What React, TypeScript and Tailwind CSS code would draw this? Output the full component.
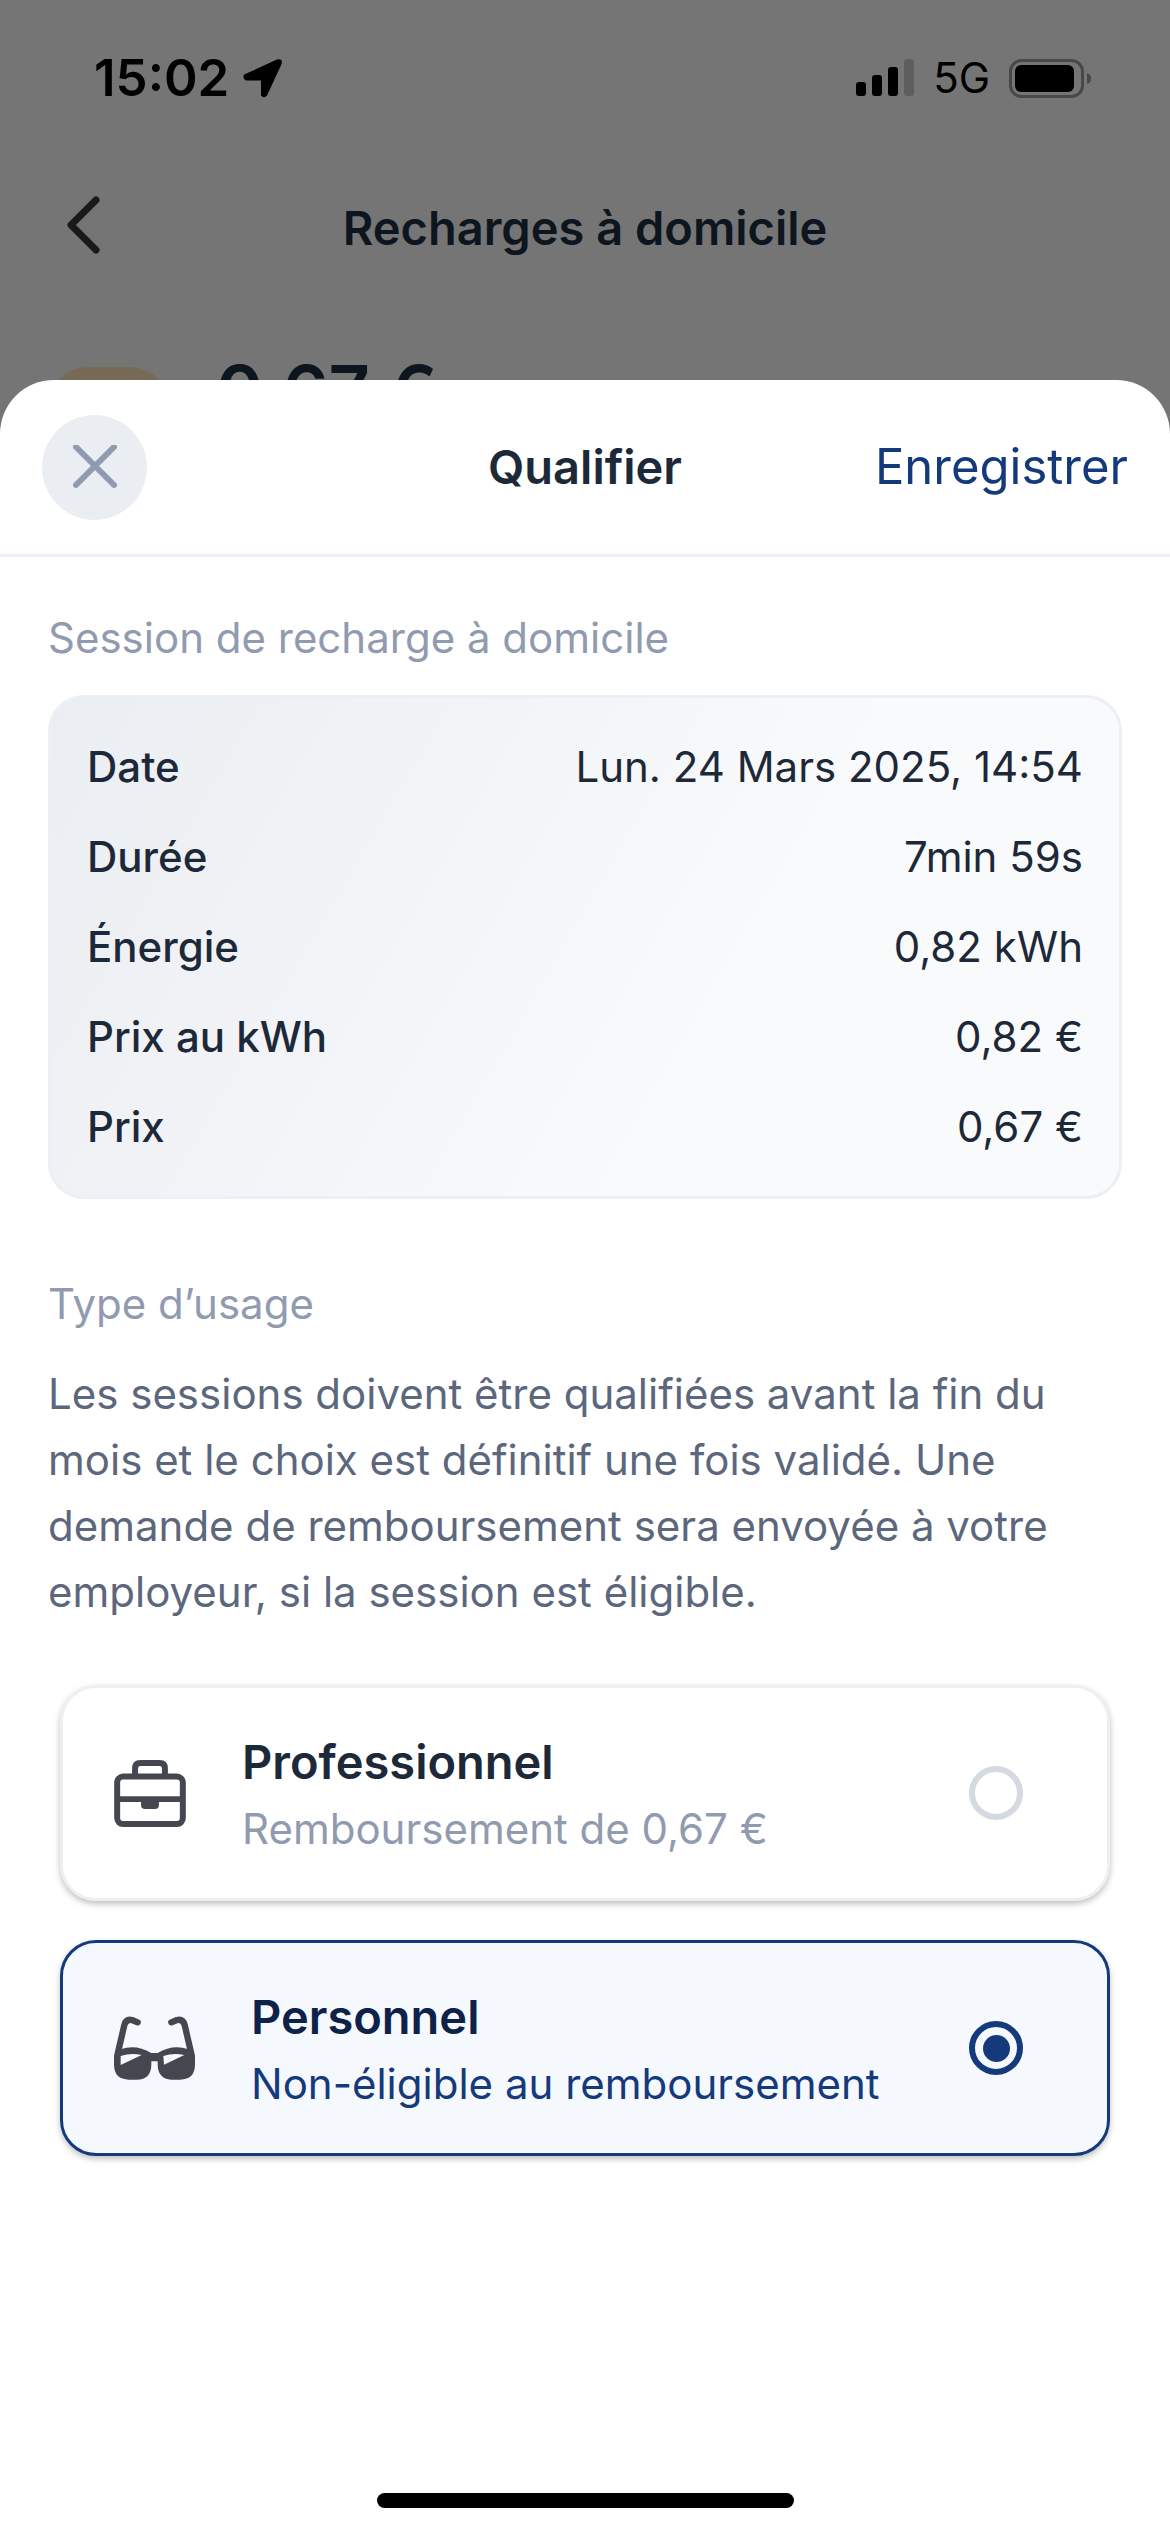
import { useState } from "react";

const details = [
  { label: "Date", value: "Lun. 24 Mars 2025, 14:54" },
  { label: "Durée", value: "7min 59s" },
  { label: "Énergie", value: "0,82 kWh" },
  { label: "Prix au kWh", value: "0,82 €" },
  { label: "Prix", value: "0,67 €" },
];

const BriefcaseIcon = () => (
  <svg viewBox="0 0 216 202" className="w-[72px] h-[67px] shrink-0" fill="none" aria-hidden="true">
    <rect x="9" y="50" width="198" height="143" rx="18" stroke="#44474f" strokeWidth="18" />
    <path d="M63 48V25Q63 9 79 9H137Q153 9 153 25V48" stroke="#44474f" strokeWidth="18" />
    <path d="M9 118H207" stroke="#44474f" strokeWidth="18" />
    <path d="M81 120H135V136Q135 148 123 148H93Q81 148 81 136Z" fill="#44474f" />
  </svg>
);

const SunglassesIcon = () => (
  <svg viewBox="0 0 243 192" className="w-[81px] h-[64px] shrink-0" fill="none" aria-hidden="true">
    <g stroke="#44474f" strokeWidth="19" strokeLinecap="round" strokeLinejoin="round">
      <path d="M10 118L31 27Q36 8 54 12L71 19" />
      <path d="M233 118L212 27Q207 8 189 12L172 19" />
    </g>
    <path
      fill="#44474f"
      fillRule="evenodd"
      d="M0 120L20 100Q66 84 112 111H131Q177 84 223 100L243 120V145Q243 191 198 191H172Q131 189 131 144V136H112V144Q112 191 68 191H45Q0 191 0 145ZM20 120Q50 110 83 117L20 147ZM148 120Q178 110 211 117L150 146Z"
    />
  </svg>
);

const StatusBar = () => (
  <div className="flex h-[141px] items-center justify-between pt-[15px] pl-[94px] pr-[79px] text-black">
    <div className="flex items-center gap-[14px]">
      <span className="text-[51px] leading-[60px] font-semibold">15:02</span>
      <svg viewBox="0 0 39 39" className="size-[39px]" aria-hidden="true">
        <path d="M34 .6Q40 -1 38.600 5L24 36.500Q21 40 18 36.500V21.500H3Q-1 19.500 1.200 15.500Z" fill="#000" />
      </svg>
    </div>
    <div className="flex items-center">
      <svg viewBox="0 0 58 38" className="w-[58px] h-[38px]" aria-hidden="true">
        <rect x="0" y="23" width="10" height="14" rx="3" />
        <rect x="16" y="16" width="10" height="21" rx="3" />
        <rect x="32" y="8" width="10" height="29" rx="3" />
        <rect x="48" y="0" width="10" height="37" rx="3" fill="#5e5e5e" />
      </svg>
      <span className="ml-[19px] text-[42px] leading-[60px]">5G</span>
      <svg viewBox="0 0 82 39" className="ml-[19px] w-[82px] h-[39px]" aria-hidden="true">
        <rect x="1.500" y="1.500" width="72" height="36" rx="11" fill="none" stroke="#484848" strokeWidth="3" />
        <rect x="6" y="6" width="59" height="27" rx="6" />
        <path d="M78 14Q82 15 82 19.500Q82 24 78 25Z" fill="#484848" />
      </svg>
    </div>
  </div>
);

interface UsageOptionProps {
  id: string;
  title: string;
  subtitle: string;
  icon: React.ReactNode;
  checked: boolean;
  onSelect: () => void;
}

const UsageOption = ({ id, title, subtitle, icon, checked, onSelect }: UsageOptionProps) => (
  <label
    htmlFor={id}
    className={`flex min-h-[216px] items-center rounded-[36px] border-[3px] pl-[51px] pr-[84px] shadow-[0_3px_6px_rgba(0,0,0,0.25)] ${
      checked ? "border-[#153a7c] bg-[#f5f8fd]" : "border-[#eceff4] bg-white"
    }`}
  >
    {icon}
    <span className="ml-[56px] flex flex-1 flex-col">
      <span className={`text-[47px] leading-[72px] font-semibold ${checked ? "text-[#0d2149]" : "text-[#1d2939]"}`}>
        {title}
      </span>
      <span className={`text-[42px] leading-[62px] ${checked ? "text-[#153a7c]" : "text-[#919bb0]"}`}>
        {subtitle}
      </span>
    </span>
    <input
      id={id}
      type="radio"
      name="usage"
      checked={checked}
      onChange={onSelect}
      className="grid size-[54px] shrink-0 appearance-none place-content-center rounded-full border-[6px] border-[#d4d9e2] before:size-[27px] before:rounded-full checked:border-[#153a7c] checked:before:bg-[#153a7c]"
    />
  </label>
);

const App = () => {
  const [usage, setUsage] = useState("personnel");

  return (
    <div className="flex min-h-screen flex-col bg-[#757575] font-['Inter',sans-serif]">
      <StatusBar />

      <div className="grid h-[174px] grid-cols-[1fr_auto_1fr] items-center px-[67px]">
        <button type="button" aria-label="Retour" className="justify-self-start">
          <svg viewBox="0 0 34 64" className="w-[34px] h-[64px]" fill="none" aria-hidden="true">
            <path d="M29 4L4 29L29 54" stroke="#1a1a1a" strokeWidth="7" strokeLinecap="round" strokeLinejoin="round" />
          </svg>
        </button>
        <h1 className="text-[47px] leading-[72px] font-semibold text-[#0d151e]">Recharges à domicile</h1>
      </div>

      <div className="flex items-start gap-[46px] px-12 pt-7">
        <div className="mt-6 size-[122px] rounded-[40px] bg-[#776b57]" />
        <p className="text-[72px] leading-[96px] font-semibold text-[#0d151e]">0,67 €</p>
      </div>

      {/* Bottom sheet, slides over the page */}
      <main className="relative -mt-[109px] flex flex-1 flex-col rounded-t-[54px] bg-white">
        <header className="grid min-h-[177px] grid-cols-[1fr_auto_1fr] items-center border-b-[3px] border-[#eeeff6] px-[42px]">
          <button
            type="button"
            aria-label="Fermer"
            className="flex size-[105px] items-center justify-center rounded-full bg-[#eaeef3]"
          >
            <svg viewBox="0 0 44 44" className="size-[44px]" fill="none" aria-hidden="true">
              <path d="M3 2L41 40M41 2L3 40" stroke="#919bb0" strokeWidth="6" strokeLinecap="round" />
            </svg>
          </button>
          <h2 className="text-[47px] leading-[72px] font-semibold text-[#1d2939]">Qualifier</h2>
          <button type="button" className="justify-self-end text-[49px] leading-[72px] text-[#153a7c]">
            Enregistrer
          </button>
        </header>

        <section className="px-12 pt-12">
          <h3 className="text-[42px] leading-[66px] text-[#919bb0]">Session de recharge à domicile</h3>
          <dl className="mt-6 flex flex-col gap-6 rounded-[36px] border-[3px] border-[#eceff5] bg-[linear-gradient(120deg,#eaeef2,#f2f3f6_30%,#f9fafc_62%)] p-9 text-[42px] leading-[66px] text-[#1d2939]">
            {details.map(({ label, value }) => (
              <div key={label} className="flex justify-between">
                <dt className="font-medium">{label}</dt>
                <dd>{value}</dd>
              </div>
            ))}
          </dl>
        </section>

        <section className="px-12 pt-[72px]">
          <h3 className="text-[42px] leading-[66px] text-[#919bb0]">Type d’usage</h3>
          <p className="mt-6 text-[42px] leading-[66px] text-[#5c677d]">
            Les sessions doivent être qualifiées avant la fin du mois et le choix est définitif une fois validé. Une
            demande de remboursement sera envoyée à votre employeur, si la session est éligible.
          </p>
          <div className="mx-3 mt-[60px] flex flex-col gap-[39px]">
            <UsageOption
              id="professionnel"
              title="Professionnel"
              subtitle="Remboursement de 0,67 €"
              icon={<BriefcaseIcon />}
              checked={usage === "professionnel"}
              onSelect={() => setUsage("professionnel")}
            />
            <UsageOption
              id="personnel"
              title="Personnel"
              subtitle="Non-éligible au remboursement"
              icon={<SunglassesIcon />}
              checked={usage === "personnel"}
              onSelect={() => setUsage("personnel")}
            />
          </div>
        </section>

        <div className="mx-auto mt-auto mb-6 h-[15px] w-[417px] rounded-full bg-black" />
      </main>
    </div>
  );
};

export default App;
